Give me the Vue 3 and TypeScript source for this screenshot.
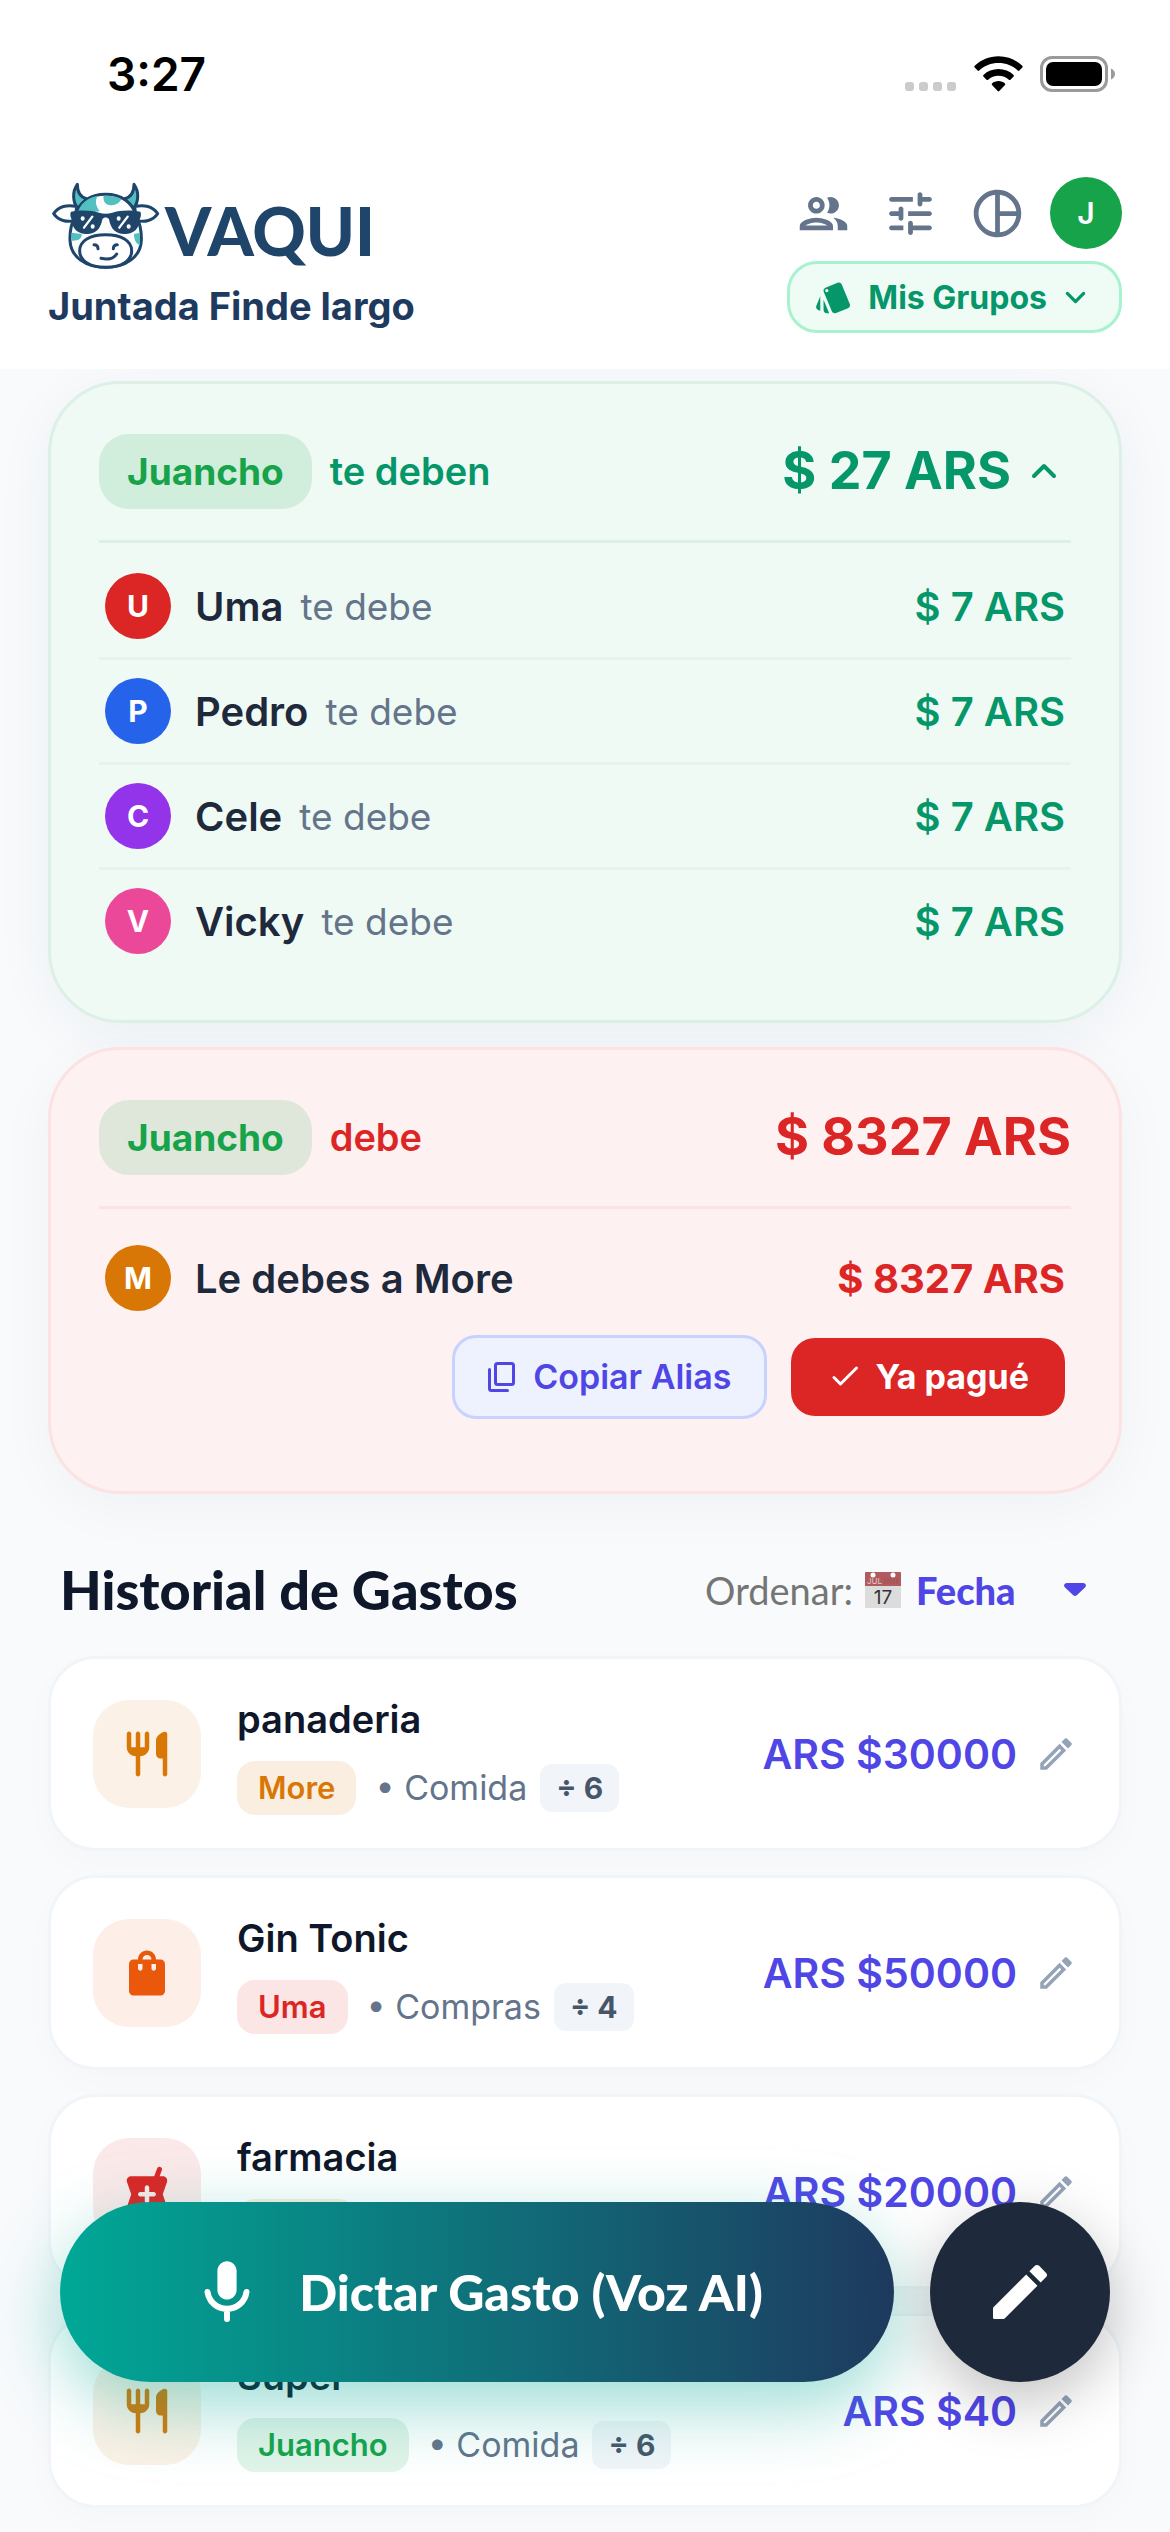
<script setup lang="ts">
import { ref } from 'vue'

interface Debtor { name: string; color: string }
interface Expense {
  title: string
  payer: string
  payerColor: string
  payerBg: string
  category: string
  split: number
  amount: string
  icon: 'food' | 'bag' | 'pharmacy'
  iconColor: string
  iconBg: string
}

const debtors: Debtor[] = [
  { name: 'Uma', color: '#dc2626' },
  { name: 'Pedro', color: '#2563eb' },
  { name: 'Cele', color: '#9333ea' },
  { name: 'Vicky', color: '#ec4899' },
]

const expenses: Expense[] = [
  { title: 'panaderia', payer: 'More', payerColor: '#d97706', payerBg: '#faeee0', category: 'Comida', split: 6, amount: 'ARS $30000', icon: 'food', iconColor: '#d97706', iconBg: '#fbf1e6' },
  { title: 'Gin Tonic', payer: 'Uma', payerColor: '#dc2626', payerBg: '#fbe5e5', category: 'Compras', split: 4, amount: 'ARS $50000', icon: 'bag', iconColor: '#ea580c', iconBg: '#fdeee7' },
  { title: 'farmacia', payer: 'More', payerColor: '#d97706', payerBg: '#faeee0', category: 'Salud', split: 6, amount: 'ARS $20000', icon: 'pharmacy', iconColor: '#dc2626', iconBg: '#fbe9e9' },
  { title: 'Super', payer: 'Juancho', payerColor: '#16a34a', payerBg: '#e2f4e9', category: 'Comida', split: 6, amount: 'ARS $40', icon: 'food', iconColor: '#d97706', iconBg: '#fbf1e6' },
]

const iconPaths: Record<Expense['icon'], string> = {
  food: 'M16 6v6c0 1.1.9 2 2 2h1v7c0 .55.45 1 1 1s1-.45 1-1V3.13c0-.65-.61-1.13-1.24-.98C17.6 2.68 16 4.51 16 6zm-5 3H9V3c0-.55-.45-1-1-1s-1 .45-1 1v6H5V3c0-.55-.45-1-1-1s-1 .45-1 1v6c0 2.21 1.79 4 4 4v8c0 .55.45 1 1 1s1-.45 1-1v-8c2.21 0 4-1.79 4-4V3c0-.55-.45-1-1-1s-1 .45-1 1v6z',
  bag: 'M18 6h-2c0-2.21-1.79-4-4-4S8 3.79 8 6H6c-1.1 0-2 .9-2 2v12c0 1.1.9 2 2 2h12c1.1 0 2-.9 2-2V8c0-1.1-.9-2-2-2zm-8 4c0 .55-.45 1-1 1s-1-.45-1-1V8h2v2zm2-6c1.1 0 2 .9 2 2h-4c0-1.1.9-2 2-2zm4 6c0 .55-.45 1-1 1s-1-.45-1-1V8h2v2z',
  pharmacy: 'M19 5h-1.4l1-2.7a1.1 1.1 0 0 0-.7-1.4 1.1 1.1 0 0 0-1.4.7L15.2 5H5C3.6 5 2.700 6.2 3.1 7.5L5 13l-1.900 5.500C2.700 19.800 3.600 21 5 21h14c1.400 0 2.300-1.200 1.900-2.500L19 13l1.900-5.500C21.300 6.200 20.400 5 19 5zm-4 9h-2v2c0 .55-.45 1-1 1s-1-.45-1-1v-2H9c-.55 0-1-.45-1-1s.45-1 1-1h2v-2c0-.55.45-1 1-1s1 .45 1 1v2h2c.55 0 1 .45 1 1s-.45 1-1 1z',
}

const open = ref(true)
const order = ref('fecha')
</script>

<template>
  <div class="app">
    <header class="top">
      <div class="status">
        <span class="time">3:27</span>
        <div class="status-icons">
          <svg class="signal" viewBox="0 0 52 10" aria-hidden="true">
            <g fill="#cbcbcb">
              <rect x="0" y="0" width="9" height="9" rx="3" />
              <rect x="14" y="0" width="9" height="9" rx="3" />
              <rect x="28" y="0" width="9" height="9" rx="3" />
              <rect x="42" y="0" width="9" height="9" rx="3" />
            </g>
          </svg>
          <svg class="wifi" viewBox="0 0 50 36" aria-hidden="true">
            <path d="M25 0C15.500 0 7 3.700.7 9.700c-.5.500-.5 1.100 0 1.600l3 3.200c.5.500 1.100.5 1.600 0C10.500 9.500 17.400 6.800 25 6.800s14.500 2.700 19.700 7.700c.5.500 1.100.5 1.600 0l3-3.200c.5-.5.5-1.100 0-1.600C43 3.700 34.500 0 25 0z" />
            <path d="M25 13c-5.900 0-11.300 2.200-15.400 5.900-.5.500-.5 1.100 0 1.600l3.200 3.300c.5.500 1.100.5 1.600 0 2.800-2.500 6.500-4 10.600-4s7.800 1.500 10.600 4c.5.500 1.100.5 1.600 0l3.200-3.300c.5-.5.5-1.100 0-1.600C36.300 15.200 30.900 13 25 13z" />
            <path d="M25 25.200c-2.500 0-4.800.9-6.600 2.400-.5.500-.5 1.100 0 1.600l5.800 6.200c.5.500 1.100.5 1.600 0l5.800-6.200c.5-.5.5-1.100 0-1.600-1.800-1.500-4.100-2.400-6.600-2.400z" />
          </svg>
          <svg class="battery" viewBox="0 0 76 36" aria-hidden="true">
            <rect x="1.500" y="1.500" width="65" height="33" rx="10.500" fill="none" stroke="#9a9a9a" stroke-width="3" />
            <rect x="6" y="6" width="56" height="24" rx="7" />
            <path d="M71 12.500c2.500 1 4 3 4 5.500s-1.500 4.500-4 5.500z" fill="#9a9a9a" />
          </svg>
        </div>
      </div>

      <div class="bar">
        <div class="brand">
          <div class="logo">
            <svg class="cow" viewBox="30 30 333 273" aria-hidden="true">
              <g stroke="#20456a" stroke-width="9" stroke-linejoin="round" stroke-linecap="round">
                <path d="M112 43c-16 22-14 52 1 73l27-30c-18-4-28-20-28-43z" fill="#52bfc1" />
                <path d="M282 43c16 22 14 52-1 73l-27-30c18-4 28-20 28-43z" fill="#52bfc1" />
                <path d="M110 110c-28-8-55 0-69 21 14 21 40 27 64 20z" fill="#fcfdfd" />
                <path d="M284 110c28-8 55 0 69 21-14 21-40 27-64 20z" fill="#fcfdfd" />
                <path d="M197 73c-47 0-80 25-91 62-12 25-17 52-16 76 2 50 47 81 107 81s105-31 107-81c1-24-4-51-16-76-11-37-44-62-91-62z" fill="#fcfdfd" />
              </g>
              <path d="M114 128c6-26 28-45 59-50-9 14-6 30 6 46l-40 4z" fill="#52bfc1" />
              <path d="M191 78c20-2 39 2 53 10-7 14-22 20-37 17-14-3-18-15-16-27z" fill="#52bfc1" />
              <path d="M94 188l31 4c1 14-10 21-30 20z" fill="#52bfc1" />
              <path d="M300 188l-18 4c0 18 6 29 18 34z" fill="#52bfc1" />
              <path d="M197 194c-47 0-78 18-78 48s30 50 78 50 78-20 78-50-31-48-78-48z" fill="#fff" stroke="#20456a" stroke-width="9" />
              <path d="M93 125c28-6 64-4 84 3 14 4 26 4 40 0 20-7 56-9 84-3 3 4 2 18-2 22 0 30-20 46-46 45-26 0-41-15-46-44-4-7-16-7-20 0-5 29-20 44-46 44-26 1-46-15-46-45-4-4-5-18-2-22z" fill="#20456a" />
              <g stroke="#fff" stroke-width="7" stroke-linecap="round">
                <path d="M132 173l25-33M238 173l25-33" />
                <path d="M128 145v1M158 169v1M236 145v1M266 169v1" stroke-width="12" />
              </g>
              <path d="M162 224c8 0 12 4 12 12M232 224c-8 0-12 4-12 12M183 265c18 4 38 2 47-13" fill="none" stroke="#20456a" stroke-width="9" stroke-linecap="round" />
            </svg>
            <span class="wordmark">VAQUI</span>
          </div>
          <h1 class="group-name">Juntada Finde largo</h1>
        </div>

        <div class="actions">
          <div class="icons">
            <button class="icon-btn" type="button" aria-label="Miembros">
              <svg viewBox="0 0 24 24"><path d="M9 13.750c-2.340 0-7 1.170-7 3.500V19h14v-1.750c0-2.330-4.660-3.500-7-3.500zM4.340 17c.84-.58 2.870-1.250 4.660-1.250s3.820.67 4.660 1.250H4.340zM9 12c1.930 0 3.500-1.570 3.500-3.500S10.930 5 9 5 5.500 6.570 5.500 8.500 7.070 12 9 12zm0-5c.83 0 1.500.67 1.500 1.500S9.830 10 9 10s-1.500-.67-1.500-1.500S8.170 7 9 7zm7.040 6.810c1.160.84 1.960 1.960 1.960 3.440V19h4v-1.750c0-2.020-3.500-3.170-5.960-3.440zM15 12c1.930 0 3.500-1.570 3.500-3.500S16.930 5 15 5c-.54 0-1.040.13-1.500.35.63.89 1 1.980 1 3.150s-.37 2.260-1 3.150c.46.22.96.35 1.500.35z" /></svg>
            </button>
            <button class="icon-btn" type="button" aria-label="Ajustes">
              <svg viewBox="0 0 24 24"><path d="M3 18c0 .55.45 1 1 1h5v-2H4c-.55 0-1 .45-1 1zM3 6c0 .55.45 1 1 1h9V5H4c-.55 0-1 .45-1 1zm10 14v-1h7c.55 0 1-.45 1-1s-.45-1-1-1h-7v-1c0-.55-.45-1-1-1s-1 .45-1 1v4c0 .55.45 1 1 1s1-.45 1-1zM7 10v1H4c-.55 0-1 .45-1 1s.45 1 1 1h3v1c0 .55.45 1 1 1s1-.45 1-1v-4c0-.55-.45-1-1-1s-1 .45-1 1zm14 2c0-.55-.45-1-1-1h-9v2h9c.55 0 1-.45 1-1zm-5-3c.55 0 1-.45 1-1V7h3c.55 0 1-.45 1-1s-.45-1-1-1h-3V4c0-.55-.45-1-1-1s-1 .45-1 1v4c0 .55.45 1 1 1z" /></svg>
            </button>
            <button class="icon-btn" type="button" aria-label="Resumen">
              <svg viewBox="0 0 24 24"><path d="M12 2C6.480 2 2 6.480 2 12s4.480 10 10 10 10-4.480 10-10S17.520 2 12 2zm1 2.070c3.610.45 6.480 3.330 6.930 6.930H13V4.070zM4 12c0-4.060 3.070-7.440 7-7.930v15.870c-3.930-.5-7-3.880-7-7.940zm9 7.930V13h6.930c-.45 3.610-3.320 6.480-6.930 6.930z" /></svg>
            </button>
            <button class="me" type="button">J</button>
          </div>
          <button class="groups" type="button">
            <svg viewBox="0 0 24 24"><path d="M2.530 19.650l1.340.56v-9.030l-2.430 5.860c-.41 1.020.08 2.190 1.090 2.610zm19.500-3.700L17.070 3.980c-.31-.75-1.040-1.210-1.810-1.230-.26 0-.53.04-.79.15L7.100 5.950c-.75.31-1.210 1.030-1.230 1.800-.01.27.04.54.15.8l4.960 11.970c.31.76 1.050 1.220 1.830 1.230.26 0 .52-.05.77-.15l7.360-3.050c1.020-.42 1.510-1.590 1.090-2.600zM7.880 8.750c-.55 0-1-.45-1-1s.45-1 1-1 1 .45 1 1-.45 1-1 1zm-2 11c0 1.100.9 2 2 2h1.450l-3.450-8.340v6.340z" /></svg>
            <span>Mis Grupos</span>
            <svg class="chev" viewBox="0 0 24 24"><path d="M7 9.500l5 5 5-5" /></svg>
          </button>
        </div>
      </div>
    </header>

    <main class="content">
      <section class="card owed">
        <div class="card-head">
          <div class="who"><span class="chip">Juancho</span><span class="verb">te deben</span></div>
          <button class="total" type="button" :aria-expanded="open" @click="open = !open">
            <span>$ 27 ARS</span>
            <svg class="chev up" viewBox="0 0 24 24"><path d="M7 14.500l5-5 5 5" /></svg>
          </button>
        </div>
        <ul v-if="open" class="rows">
          <li v-for="d in debtors" :key="d.name" class="row">
            <span class="avatar" :style="{ background: d.color }">{{ d.name[0] }}</span>
            <span class="name">{{ d.name }}</span>
            <span class="note">te debe</span>
            <span class="sum">$ 7 ARS</span>
          </li>
        </ul>
      </section>

      <section class="card owes">
        <div class="card-head">
          <div class="who"><span class="chip">Juancho</span><span class="verb">debe</span></div>
          <span class="total">$ 8327 ARS</span>
        </div>
        <div class="debt">
          <div class="debt-line">
            <span class="avatar amber">M</span>
            <span class="name">Le debes a More</span>
            <span class="sum">$ 8327 ARS</span>
          </div>
          <div class="debt-actions">
            <button class="copy" type="button">
              <svg viewBox="0 0 27 30"><rect x="7.500" y="1.500" width="18" height="21" rx="2" /><path d="M1.500 7.500v19a2 2 0 0 0 2 2h16" /></svg>
              Copiar Alias
            </button>
            <button class="paid" type="button">
              <svg viewBox="0 0 36 36"><path d="M7 18.500l6.500 6.500 16-16" /></svg>
              Ya pagué
            </button>
          </div>
        </div>
      </section>

      <div class="section-head">
        <h2>Historial de Gastos</h2>
        <div class="sort">
          <label for="order">Ordenar:</label>
          <svg class="calendar" viewBox="0 0 36 36" aria-hidden="true">
            <rect width="36" height="36" rx="1" fill="#dcdcdc" />
            <path d="M0 1a1 1 0 0 1 1-1h34a1 1 0 0 1 1 1v13H0z" fill="#b05c5f" />
            <circle cx="8" cy="3" r="2.500" fill="#fff" />
            <circle cx="28" cy="3" r="2.500" fill="#fff" />
            <path d="M20 6v6M23 6v6M26 6v6M29 6v6M32 6v6" stroke="#a04f53" />
            <text x="2" y="12" font-size="8" fill="#e6c4c5">JUL</text>
            <text x="18" y="32" font-size="19" text-anchor="middle" fill="#333">17</text>
          </svg>
          <select id="order" v-model="order">
            <option value="fecha">Fecha</option>
            <option value="monto">Monto</option>
          </select>
          <svg class="caret" viewBox="0 0 22 14" aria-hidden="true"><path d="M3 0h16c2.500 0 4 2.500 2 4.500l-8 7.500c-1.200 1.200-2.800 1.200-4 0L1 4.500C-1 2.500.5 0 3 0z" /></svg>
        </div>
      </div>

      <ul class="expenses">
        <li v-for="e in expenses" :key="e.title" class="expense">
          <span class="tile" :style="{ background: e.iconBg, color: e.iconColor }">
            <svg viewBox="0 0 24 24"><path :d="iconPaths[e.icon]" /></svg>
          </span>
          <div class="info">
            <h3>{{ e.title }}</h3>
            <div class="meta">
              <span class="payer" :style="{ background: e.payerBg, color: e.payerColor }">{{ e.payer }}</span>
              <span class="category">• {{ e.category }}</span>
              <span class="split">÷ {{ e.split }}</span>
            </div>
          </div>
          <span class="price">{{ e.amount }}</span>
          <button class="edit" type="button" aria-label="Editar gasto">
            <svg viewBox="0 0 24 24"><path d="M14.060 9.020l.92.92L5.920 19H5v-.92l9.060-9.060M17.660 3c-.25 0-.51.1-.7.29l-1.830 1.830 3.750 3.750 1.830-1.830c.39-.39.39-1.020 0-1.410l-2.340-2.340c-.2-.2-.45-.29-.71-.29zm-3.600 3.190L3 17.250V21h3.750L17.810 9.940l-3.750-3.750z" /></svg>
          </button>
        </li>
      </ul>
    </main>

    <div class="dock">
      <button class="voice" type="button">
        <svg viewBox="0 0 24 24"><path d="M12 14.500c1.750 0 3.200-1.450 3.200-3.200V4.950C15.200 3.200 13.750 1.750 12 1.750S8.800 3.200 8.800 4.950v6.350c0 1.750 1.450 3.200 3.200 3.200z" /><path d="M5.500 12c.5 3.300 3.200 5.600 6.500 5.600s6-2.300 6.500-5.600M12 17.800v3.200" fill="none" stroke="#fff" stroke-width="2" stroke-linecap="round" /></svg>
        Dictar Gasto (Voz AI)
      </button>
      <button class="write" type="button" aria-label="Agregar gasto">
        <svg viewBox="0 0 24 24"><path d="M3 17.460v3.040c0 .28.22.5.5.5h3.040c.13 0 .26-.05.35-.15L17.810 9.940l-3.750-3.750L3.150 17.100c-.1.1-.15.22-.15.36zM20.710 7.040c.39-.39.39-1.020 0-1.410l-2.340-2.340c-.39-.39-1.020-.39-1.410 0l-1.830 1.830 3.750 3.750 1.830-1.830z" /></svg>
      </button>
    </div>
  </div>
</template>

<style>
body {
  margin: 0;
  background: #f8fafc;
}
</style>

<style scoped>
.app {
  font-family: Inter, 'Liberation Sans', sans-serif;
  color: #0f172a;
  background: #f8fafc;
}
h1, h2, h3, ul {
  margin: 0;
  padding: 0;
}
ul {
  list-style: none;
}
button, select {
  font: inherit;
  color: inherit;
  background: none;
  border: 0;
  padding: 0;
  cursor: pointer;
}
svg {
  display: block;
  flex: none;
  fill: currentColor;
}

/* Header */
.top {
  position: sticky;
  top: 0;
  z-index: 2;
  background: #fff;
}
.status {
  height: 147px;
  padding: 0 54px 0 107px;
  display: flex;
  align-items: center;
  justify-content: space-between;
  color: #000;
}
.time {
  font-size: 46px;
  font-weight: 600;
}
.status-icons {
  display: flex;
  align-items: flex-end;
  gap: 17px;
}
.signal { width: 52px; height: 10px; }
.wifi { width: 49px; height: 36px; }
.battery { width: 76px; height: 36px; }
.bar {
  display: flex;
  justify-content: space-between;
  padding: 30px 48px 36px;
}
.logo {
  display: flex;
  align-items: center;
  height: 96px;
}
.cow { width: 111px; height: 91px; margin-left: 2px; }
.wordmark {
  margin: 12px 0 0 4px;
  font-family: Lato, sans-serif;
  font-size: 66px;
  line-height: 72px;
  font-weight: 900;
  color: #20456a;
}
.group-name {
  margin-top: 9px;
  font-size: 38px;
  line-height: 48px;
  font-weight: 700;
  color: #1e3a5f;
}
.actions {
  display: flex;
  flex-direction: column;
  align-items: flex-end;
  gap: 12px;
}
.icons {
  display: flex;
  align-items: center;
}
.icon-btn {
  width: 87px;
  height: 72px;
  display: grid;
  place-items: center;
  color: #64748b;
}
.icon-btn svg { width: 57px; height: 57px; }
.me {
  width: 72px;
  height: 72px;
  margin-left: 9px;
  border-radius: 50%;
  background: #16a34a;
  color: #fff;
  font-size: 30px;
  font-weight: 600;
}
.groups {
  height: 72px;
  box-sizing: border-box;
  display: flex;
  align-items: center;
  padding: 0 24px;
  border: 3px solid #a7f3d0;
  border-radius: 30px;
  background: #effcf5;
  color: #059669;
  font-size: 32px;
  font-weight: 700;
}
.groups svg { width: 39px; height: 39px; }
.groups span { margin: 0 9px 0 15px; }
.chev path {
  fill: none;
  stroke: currentColor;
  stroke-width: 2;
  stroke-linecap: round;
  stroke-linejoin: round;
}

/* Balance cards */
.content {
  padding: 12px 48px 24px;
}
.card {
  border: 3px solid;
  border-radius: 72px;
  padding: 48px;
}
.owed {
  border-color: #dcf0e6;
  background: #effaf4;
  box-shadow: 0 12px 60px rgba(15, 60, 80, 0.05);
}
.owes {
  margin-top: 24px;
  border-color: #fce2e2;
  background: #fdf2f1;
  box-shadow: 0 12px 60px rgba(60, 20, 40, 0.04);
}
.card-head {
  display: flex;
  align-items: center;
  justify-content: space-between;
  height: 78px;
  padding-bottom: 30px;
  border-bottom: 3px solid;
  border-color: inherit;
}
.who {
  display: flex;
  align-items: center;
  gap: 18px;
}
.chip {
  padding: 0 28px;
  border-radius: 30px;
  font-size: 37px;
  line-height: 75px;
  font-weight: 700;
  color: #16a34a;
  background: #d1eddc;
}
.owes .chip { background: #dee7da; }
.verb {
  font-size: 38px;
  font-weight: 600;
}
.owed .verb, .owed .total, .owed .sum { color: #059669; }
.owes .verb, .owes .total, .owes .sum { color: #dc2626; }
.total {
  display: flex;
  align-items: center;
  gap: 9px;
  font-size: 52px;
  line-height: 66px;
  font-weight: 700;
}
.total .chev { width: 48px; height: 48px; margin-right: 3px; }
.rows { padding-top: 12px; }
.row {
  display: flex;
  align-items: center;
  height: 66px;
  padding: 18px 6px;
}
.row + .row { border-top: 3px solid #e6f4ec; }
.avatar {
  width: 66px;
  height: 66px;
  border-radius: 50%;
  display: grid;
  place-items: center;
  color: #fff;
  font-size: 30px;
  font-weight: 700;
}
.amber { background: #d97706; }
.name {
  margin-left: 24px;
  font-size: 40px;
  font-weight: 600;
  color: #1e293b;
}
.note {
  margin-left: 17px;
  font-size: 37px;
  color: #64748b;
}
.sum {
  margin-left: auto;
  font-size: 40px;
  font-weight: 600;
}
.owes .sum { font-weight: 700; }
.debt { padding: 36px 6px 24px; }
.debt-line {
  display: flex;
  align-items: center;
}
.debt-actions {
  display: flex;
  justify-content: flex-end;
  align-items: center;
  gap: 24px;
  margin-top: 24px;
}
.copy, .paid {
  display: flex;
  align-items: center;
  border-radius: 24px;
  font-size: 34px;
  line-height: 78px;
}
.copy {
  gap: 18px;
  padding: 0 33px;
  border: 3px solid #c7d2fe;
  background: #eef2ff;
  color: #4f46e5;
  font-weight: 600;
}
.copy svg {
  width: 27px;
  height: 30px;
  fill: none;
  stroke: currentColor;
  stroke-width: 3;
  stroke-linecap: round;
}
.paid {
  gap: 12px;
  padding: 0 36px;
  background: #dc2626;
  color: #fff;
  font-weight: 700;
}
.paid svg {
  width: 36px;
  height: 36px;
  fill: none;
  stroke: currentColor;
  stroke-width: 3;
  stroke-linecap: round;
  stroke-linejoin: round;
}

/* Expense history */
.section-head {
  display: flex;
  align-items: center;
  justify-content: space-between;
  height: 96px;
  margin: 48px 0 18px;
  padding: 0 36px 0 12px;
  font-family: Lato, sans-serif;
}
.section-head h2 {
  font-size: 54px;
  line-height: 66px;
  font-weight: 900;
}
.sort {
  display: flex;
  align-items: center;
  font-size: 38px;
}
.sort label { color: #757575; }
.calendar {
  width: 36px;
  height: 36px;
  margin: 0 15px 0 12px;
  font-family: Inter, sans-serif;
}
.sort select {
  appearance: none;
  color: #4f46e5;
  font-weight: 900;
}
.caret {
  width: 22px;
  height: 14px;
  margin-left: 33px;
  color: #4f46e5;
}
.expenses {
  display: flex;
  flex-direction: column;
  gap: 24px;
}
.expense {
  display: flex;
  align-items: center;
  padding: 33px 42px;
  border: 3px solid #f1f5f9;
  border-radius: 48px;
  background: #fff;
  box-shadow: 0 12px 36px rgba(15, 23, 42, 0.02);
}
.tile {
  width: 108px;
  height: 108px;
  border-radius: 36px;
  display: grid;
  place-items: center;
}
.tile svg { width: 54px; height: 54px; }
.info { margin-left: 36px; }
.info h3 {
  font-size: 38px;
  line-height: 54px;
  font-weight: 600;
}
.meta {
  display: flex;
  align-items: center;
  margin-top: 15px;
}
.payer {
  padding: 0 21px;
  border-radius: 18px;
  font-size: 31px;
  line-height: 54px;
  font-weight: 600;
}
.category {
  margin: 0 13px 0 19px;
  font-size: 34px;
  line-height: 48px;
  color: #64748b;
}
.split {
  padding: 0 16px;
  border-radius: 12px;
  font-size: 30px;
  line-height: 48px;
  font-weight: 700;
  color: #475569;
  background: #f1f5f9;
}
.price {
  margin-left: auto;
  font-size: 41px;
  font-weight: 600;
  color: #4f46e5;
}
.edit {
  margin-left: 18px;
  color: #94a3b8;
}
.edit svg { width: 42px; height: 42px; }

/* Floating actions */
.dock {
  position: fixed;
  z-index: 3;
  left: 60px;
  right: 60px;
  bottom: 150px;
  display: flex;
  gap: 36px;
}
.voice {
  flex: 1;
  height: 180px;
  display: flex;
  align-items: center;
  justify-content: center;
  gap: 36px;
  border-radius: 90px;
  background: linear-gradient(90deg, #00a896, #1e3a5f);
  box-shadow: 0 24px 72px rgba(0, 168, 150, 0.4);
  color: #fff;
  font-family: Lato, sans-serif;
  font-size: 50px;
  font-weight: 900;
}
.voice svg { width: 72px; height: 72px; }
.write {
  width: 180px;
  height: 180px;
  display: grid;
  place-items: center;
  border-radius: 50%;
  background: #1e293b;
  color: #fff;
  box-shadow: 0 18px 60px rgba(0, 0, 0, 0.25);
}
.write svg { width: 72px; height: 72px; }
</style>
